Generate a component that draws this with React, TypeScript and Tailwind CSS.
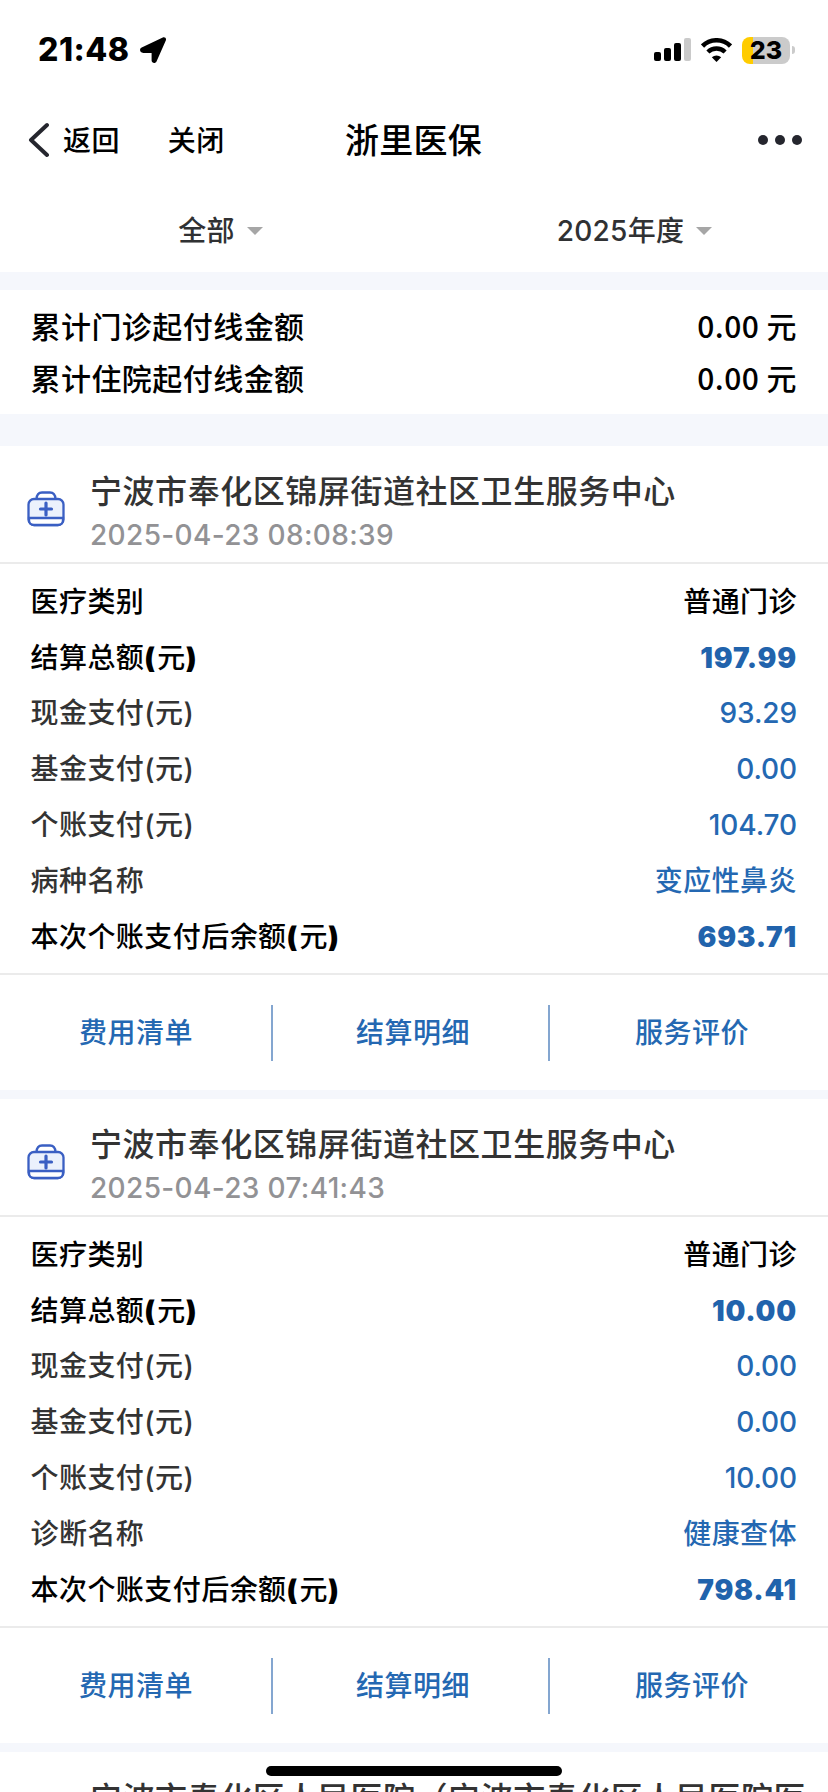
type Row = { label: string; value: string; tone: 'head' | 'strong' | 'plain' };
type RecordItem = { hospital: string; time: string; rows: Row[] };

const records: RecordItem[] = [
  {
    hospital: '宁波市奉化区锦屏街道社区卫生服务中心',
    time: '2025-04-23 08:08:39',
    rows: [
      { label: '医疗类别', value: '普通门诊', tone: 'head' },
      { label: '结算总额(元)', value: '197.99', tone: 'strong' },
      { label: '现金支付(元)', value: '93.29', tone: 'plain' },
      { label: '基金支付(元)', value: '0.00', tone: 'plain' },
      { label: '个账支付(元)', value: '104.70', tone: 'plain' },
      { label: '病种名称', value: '变应性鼻炎', tone: 'plain' },
      { label: '本次个账支付后余额(元)', value: '693.71', tone: 'strong' },
    ],
  },
  {
    hospital: '宁波市奉化区锦屏街道社区卫生服务中心',
    time: '2025-04-23 07:41:43',
    rows: [
      { label: '医疗类别', value: '普通门诊', tone: 'head' },
      { label: '结算总额(元)', value: '10.00', tone: 'strong' },
      { label: '现金支付(元)', value: '0.00', tone: 'plain' },
      { label: '基金支付(元)', value: '0.00', tone: 'plain' },
      { label: '个账支付(元)', value: '10.00', tone: 'plain' },
      { label: '诊断名称', value: '健康查体', tone: 'plain' },
      { label: '本次个账支付后余额(元)', value: '798.41', tone: 'strong' },
    ],
  },
];

const labelTone = {
  head: 'text-black',
  strong: 'text-black',
  plain: 'text-[#333333]',
};
const valueTone = {
  head: 'text-black',
  strong: 'font-black tracking-[0.8px] text-[#2163ac]',
  plain: 'text-[#2468b2]',
};

function StatusBar() {
  return (
    <div className="flex h-[100px] items-center justify-between pl-[38px] pr-[33px]">
      <div className="flex items-center gap-[10px]">
        <span className="text-[32px] font-extrabold leading-none tracking-[0.5px] text-black">21:48</span>
        <svg width="27" height="27" viewBox="0 0 27 27">
          <path d="M1.700 10.600 22.800.600c2-.900 3.900.900 3 2.900L16.500 24.500c-1.100 2.400-4.900 1.700-4.900-1v-7.600H3.300C-.200 15.900-1.100 11.900 1.700 10.600Z" fill="#000" />
        </svg>
      </div>
      <div className="flex items-center">
        <svg width="37" height="24" viewBox="0 0 37 24">
          <rect x="0" y="14" width="7" height="9" rx="2" />
          <rect x="10" y="10" width="7" height="13" rx="2" />
          <rect x="20" y="5" width="7" height="18" rx="2" />
          <rect x="30" y="0" width="7" height="23" rx="2" fill="#cacaca" />
        </svg>
        <svg className="ml-[10px]" width="31" height="24" viewBox="0 0 31 24">
          <path d="M1.500 8a20 20 0 0 1 28 0" fill="none" stroke="#000" strokeWidth="4.600" />
          <path d="M6.900 14a12.400 12.400 0 0 1 17.200 0" fill="none" stroke="#000" strokeWidth="4.400" />
          <path d="M10.800 19.2a7 7 0 0 1 9.400 0L15.500 24Z" fill="#000" />
        </svg>
        <div className="ml-[10px] flex h-[27px] w-[48px] items-center justify-center rounded-[8px] bg-[linear-gradient(to_right,#ffcc00_11px,#cbcbcb_11px)]">
          <span className="text-[25px] font-extrabold leading-[27px] text-black">23</span>
        </div>
        <span className="ml-[2px] h-[8px] w-[3px] rounded-r-full bg-[#cbcbcb]" />
      </div>
    </div>
  );
}

function NavBar() {
  return (
    <div className="grid h-[80px] grid-cols-[1fr_auto_1fr] items-center pl-[27px] pr-[26px]">
      <div className="flex items-center text-[28px] font-medium tracking-[0.4px] text-black">
        <svg width="22" height="36" viewBox="0 0 22 36">
          <path d="M20 3 4 18l16 15" fill="none" stroke="#25262e" strokeWidth="4" strokeLinecap="round" strokeLinejoin="round" />
        </svg>
        <span className="ml-[14px] pt-[2px]">返回</span>
        <span className="ml-[48px] pt-[2px]">关闭</span>
      </div>
      <h1 className="pr-[2px] text-[34px] font-medium tracking-[0.3px] text-black">浙里医保</h1>
      <div className="flex justify-end gap-[7px]">
        <span className="size-[10px] rounded-full bg-[#25262e]" />
        <span className="size-[10px] rounded-full bg-[#25262e]" />
        <span className="size-[10px] rounded-full bg-[#25262e]" />
      </div>
    </div>
  );
}

function Filter({ text }: { text: string }) {
  return (
    <div className="flex flex-1 items-center justify-center gap-[12px] pl-[27px] pt-[1px] text-[28px] font-medium tracking-[0.3px] text-[#303133]">
      <span>{text}</span>
      <svg width="16" height="8" viewBox="0 0 16 8">
        <path d="M0 0h16L8 8Z" fill="#a6a6a6" />
      </svg>
    </div>
  );
}

function KitIcon() {
  return (
    <svg className="mt-[2px] shrink-0" width="38" height="36" viewBox="0 0 38 36" fill="none" stroke="#3a5fc3" strokeWidth="2.3">
      <rect x="1.5" y="8" width="35" height="26" rx="5.5" fill="#ebf1fc" />
      <path d="M2 27h34v2a5 5 0 0 1-5 5H7a5 5 0 0 1-5-5Z" fill="#fff" />
      <path d="M9.500 8c.3-4.500 2.500-6.500 5.500-6.500h8c3 0 5.200 2 5.500 6.500" />
      <path d="M19 12v12M13.500 18h11" strokeWidth="3.200" strokeLinecap="round" />
    </svg>
  );
}

function RowLabel({ row }: { row: Row }) {
  if (row.tone !== 'strong') return <span className={labelTone[row.tone]}>{row.label}</span>;
  return (
    <span className={labelTone.strong}>
      {row.label.split(/([()])/).map((part, i) =>
        part === '(' || part === ')' ? (
          <b key={i} className="font-black tracking-[2px]">
            {part}
          </b>
        ) : (
          part
        ),
      )}
    </span>
  );
}

function RowValue({ row }: { row: Row }) {
  const numeric = row.tone === 'plain' && /^[\d.]+$/.test(row.value);
  return (
    <span className={valueTone[row.tone]}>
      {numeric ? <span className="tracking-[-0.1px]">{row.value}</span> : row.value}
    </span>
  );
}

function RecordCard({ item }: { item: RecordItem }) {
  return (
    <section className="bg-white">
      <header className="flex h-[118px] items-center border-b-2 border-[#ebebeb] pl-[27px] pt-[8px]">
        <KitIcon />
        <div className="ml-[25px] pt-[9px]">
          <h2 className="text-[32px] font-medium leading-[44px] tracking-[0.55px] text-[#333333]">{item.hospital}</h2>
          <p className="text-[28px] font-medium leading-[42px] tracking-[0.35px] text-[#929295]">{item.time}</p>
        </div>
      </header>
      <div className="flex h-[411px] flex-col border-b-2 border-[#ebebeb] pl-[30.5px] pr-[31px] pt-[10px] text-[28px] font-medium tracking-[0.45px]">
        {item.rows.map((row) => (
          <div key={row.label} className="flex h-[55.8px] items-center justify-between">
            <RowLabel row={row} />
            <RowValue row={row} />
          </div>
        ))}
      </div>
      <footer className="flex h-[115px] items-center text-center text-[28px] font-medium tracking-[0.45px] text-[#2468b2]">
        <span className="w-[271px] pl-px pt-[1px]">费用清单</span>
        <span className="h-[56px] w-[2px] bg-[#84a6d0]" />
        <span className="w-[275px] pl-[5px] pt-[1px]">结算明细</span>
        <span className="h-[56px] w-[2px] bg-[#84a6d0]" />
        <span className="flex-1 pl-[6px] pt-[1px]">服务评价</span>
      </footer>
    </section>
  );
}

export default function App() {
  return (
    <main className="relative flex h-[1792px] w-[828px] flex-col overflow-hidden bg-[#f5f7fc] font-['Inter','Noto_Sans_CJK_SC',sans-serif]">
      <div className="h-[272px] shrink-0 bg-white">
        <StatusBar />
        <NavBar />
        <div className="flex h-[100px] items-center">
          <Filter text="全部" />
          <Filter text="2025年度" />
        </div>
      </div>
      <section className="mt-[18px] flex h-[124px] shrink-0 flex-col bg-white pl-[30.5px] pr-[31px] pt-[9px] font-['Noto_Sans_CJK_SC',sans-serif] text-[30px] font-medium leading-[52px] tracking-[0.45px] text-black">
        <div className="flex justify-between">
          <span>累计门诊起付线金额</span>
          <span>0.00 元</span>
        </div>
        <div className="flex justify-between">
          <span>累计住院起付线金额</span>
          <span>0.00 元</span>
        </div>
      </section>
      <div className="mt-[32px] flex shrink-0 flex-col gap-[9px]">
        {records.map((item) => (
          <RecordCard key={item.time} item={item} />
        ))}
        <section className="h-[200px] bg-white pl-[90px] pt-[25px]">
          <h2 className="whitespace-nowrap text-[32px] font-medium leading-[44px] tracking-[0.55px] text-[#333333]">宁波市奉化区人民医院（宁波市奉化区人民医院医</h2>
        </section>
      </div>
      <div className="absolute left-[266px] top-[1766px] h-[10px] w-[296px] rounded-full bg-black" />
    </main>
  );
}
